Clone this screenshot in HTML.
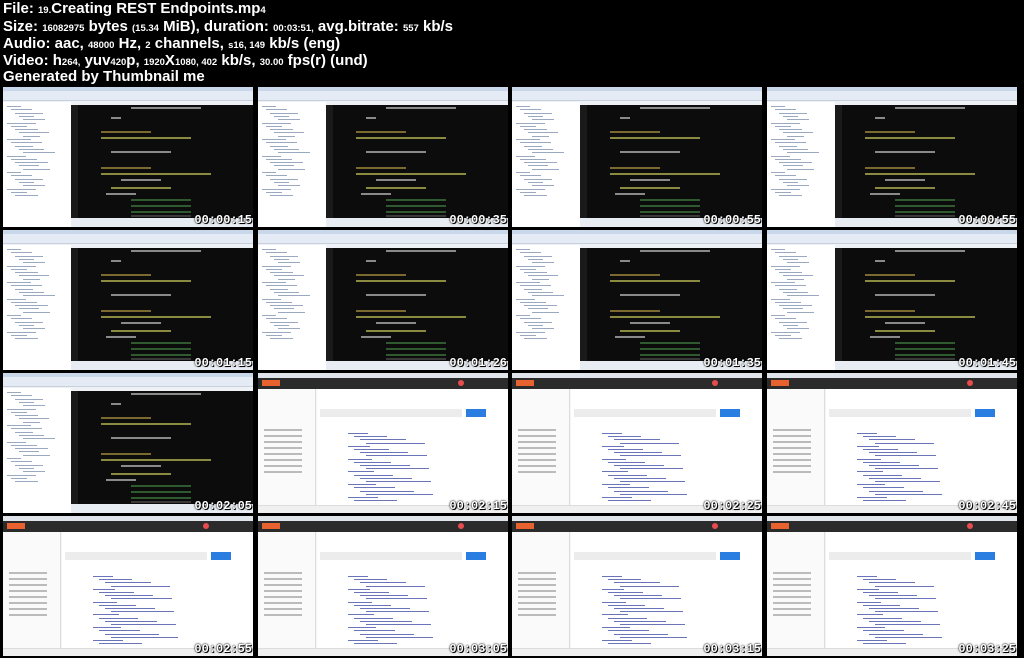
<!DOCTYPE html>
<html><head><meta charset="utf-8"><style>
*{margin:0;padding:0;box-sizing:border-box}
body{width:1024px;height:658px;background:#000;position:relative;overflow:hidden;font-family:"Liberation Sans",sans-serif}
.hd{position:absolute;left:3px;color:#fff;font-weight:bold;font-size:15px;line-height:17px;white-space:nowrap;letter-spacing:0}
.hd s{text-decoration:none;font-size:9.5px}
.t{position:absolute;width:250px;height:140px;overflow:hidden;background:#eef2f7}
.ts{position:absolute;right:1px;bottom:0px;color:#fff;font-weight:bold;font-size:12px;font-family:"Liberation Mono",monospace;text-shadow:0 0 2px #000,0 0 1px #000,1px 1px 0 #000;letter-spacing:0}
.ide .tb{position:absolute;left:0;top:0;width:250px;height:4px;background:#c9d7ea}
.ide .mb{position:absolute;left:0;top:4px;width:250px;height:10px;background:#e4ebf4;border-bottom:1px solid #c8d0dc}
.ide .lp{position:absolute;left:0;top:15px;width:68px;height:125px;background:#fff}
.ide .ln{position:absolute;height:1px;background:#9aa8c0}
.ide .ed{position:absolute;left:68px;top:18px;width:182px;height:113px;background:#0c0c0c}
.ide .g{position:absolute;left:68px;top:18px;width:7px;height:113px;background:#1a1a1a}
.ide .st{position:absolute;left:68px;top:131px;width:182px;height:9px;background:#e8edf3}
.c{position:absolute;height:2px}
.y{background:#8a8a40}.w{background:#8a8a8a}.gr{background:#2f5a2f}.o{background:#7a6a30}.hl{background:#3a3a3a}
.pm{background:#f5f5f5}
.pm .top{position:absolute;left:0;top:0;width:250px;height:5px;background:#dfe4ea}
.pm .bar{position:absolute;left:0;top:5px;width:250px;height:11px;background:#2b2b2b}
.pm .or{position:absolute;left:4px;top:7px;width:18px;height:6px;background:#e8622f}
.pm .rd{position:absolute;left:200px;top:7px;width:6px;height:6px;border-radius:3px;background:#e84c4c}
.pm .sb{position:absolute;left:0;top:16px;width:58px;height:116px;background:#fafafa;border-right:1px solid #ddd}
.pm .sl{position:absolute;height:2px;background:#bbb}
.pm .main{position:absolute;left:59px;top:16px;width:191px;height:116px;background:#fff}
.pm .send{position:absolute;left:208px;top:36px;width:20px;height:8px;background:#2a7de1}
.pm .url{position:absolute;left:62px;top:36px;width:142px;height:8px;background:#ececec}
.pm .foot{position:absolute;left:0;top:132px;width:250px;height:8px;background:#f0f0f0;border-top:1px solid #ddd}
.j{position:absolute;height:1px;background:#6b74b8}
</style></head><body>
<div class="hd" style="top:0px">File: <s>19.</s>Creating REST Endpoints.mp<s>4</s></div>
<div class="hd" style="top:18px">Size: <s>16082975</s> bytes <s>(15.34</s> MiB), duration: <s>00:03:51,</s> avg.bitrate: <s>557</s> kb/s</div>
<div class="hd" style="top:35px">Audio: aac, <s>48000</s> Hz, <s>2</s> channels, <s>s16, 149</s> kb/s (eng)</div>
<div class="hd" style="top:52px">Video: h<s>264,</s> yuv<s>420</s>p, <s>1920</s>X<s>1080, 402</s> kb/s, <s>30.00</s> fps(r) (und)</div>
<div class="hd" style="top:68px">Generated by Thumbnail me</div>
<div id="grid"></div>
<script>
var X=[3,258,512,767],Y=[87,230,373,516];
var ts=["00:00:15","00:00:35","00:00:55","00:00:55","00:01:15","00:01:26","00:01:35","00:01:45","00:02:05","00:02:15","00:02:25","00:02:45","00:02:55","00:03:05","00:03:15","00:03:25"];
function ide(){var h='<div class="tb"></div><div class="mb"></div><div class="lp">';
for(var i=0;i<28;i++){h+='<div class="ln" style="left:'+(4+(i%5)*4)+'px;top:'+(4+i*3.3)+'px;width:'+(14+(i*7)%20)+'px"></div>';}
h+='</div><div class="ed"></div><div class="g"></div>';
var rows=[[60,70,'w'],[40,10,'w'],[30,50,'o'],[30,90,'y'],[40,60,'w'],[30,50,'o'],[30,110,'y'],[50,40,'w'],[40,60,'y'],[35,30,'w'],[60,60,'gr'],[60,60,'gr'],[60,60,'gr'],[60,60,'hl'],[60,55,'gr']];
var ys=[20,30,44,50,64,80,86,92,100,106,112,118,124,128,133];
for(var k=0;k<rows.length;k++){if(ys[k]>128)continue;h+='<div class="c '+rows[k][2]+'" style="left:'+(68+rows[k][0])+'px;top:'+ys[k]+'px;width:'+rows[k][1]+'px"></div>';}
h+='<div class="st"></div>';return h;}
function pm(){var h='<div class="top"></div><div class="bar"></div><div class="or"></div><div class="rd"></div><div class="sb">';
for(var i=0;i<8;i++){h+='<div class="sl" style="left:6px;top:'+(40+i*6)+'px;width:38px"></div>';}
h+='</div><div class="main"></div><div class="url"></div><div class="send"></div>';
for(var i=0;i<22;i++){h+='<div class="j" style="left:'+(90+(i%4)*6)+'px;top:'+(60+i*3.2)+'px;width:'+(20+(i*13)%50)+'px"></div>';}
h+='<div class="foot"></div>';return h;}
var out='';
for(var r=0;r<4;r++)for(var c=0;c<4;c++){var n=r*4+c;var isI=n<9;
out+='<div class="t '+(isI?'ide':'pm')+'" style="left:'+X[c]+'px;top:'+Y[r]+'px">'+(isI?ide():pm())+'<div class="ts">'+ts[n]+'</div></div>';}
document.getElementById('grid').innerHTML=out;
</script>
</body></html>
